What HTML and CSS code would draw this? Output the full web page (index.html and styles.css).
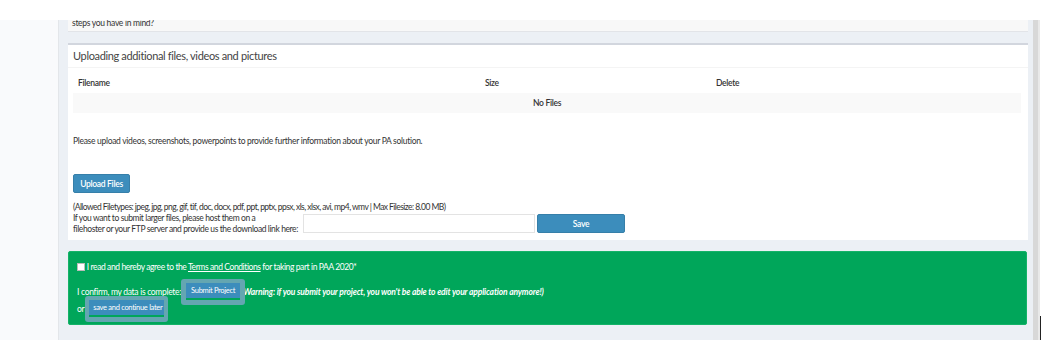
FILE: index.html
```html
<!DOCTYPE html>
<html>
<head>
<meta charset="utf-8">
<link rel="stylesheet" href="styles.css">
</head>
<body>
<div class="topbar"></div>
<div class="main">
  <aside class="sidebar"></aside>
  <div class="content">
    <div class="box box-prev">
      <p class="prev-text">steps you have in mind?</p>
    </div>
    <div class="box box-upload">
      <div class="box-header">Uploading additional files, videos and pictures</div>
      <div class="box-body">
        <table class="files">
          <colgroup><col class="c1"><col class="c2"><col class="c3"></colgroup>
          <thead><tr><th>Filename</th><th>Size</th><th>Delete</th></tr></thead>
          <tbody><tr class="empty"><td colspan="3">No Files</td></tr></tbody>
        </table>
        <p class="hint">Please upload videos, screenshots, powerpoints to provide further information about your PA solution.</p>
        <button class="btn btn-upload">Upload Files</button>
        <p class="allowed">(Allowed Filetypes: jpeg, jpg, png, gif, tif, doc, docx, pdf, ppt, pptx, ppsx, xls, xlsx, avi, mp4, wmv | Max Filesize: 8.00 MB)</p>
        <div class="link-row">
          <p class="link-label">If you want to submit larger files, please host them on a<br>filehoster or your FTP server and provide us the download link here:</p>
          <span class="input"></span>
          <button class="btn btn-save">Save</button>
        </div>
      </div>
    </div>
    <div class="box box-green">
      <div class="agree"><span class="check"></span> I read and hereby agree to the <u>Terms and Conditions</u> for taking part in PAA 2020*</div>
      <div class="confirm"><span class="lbl">I confirm, my data is complete:</span><span class="ring ring-submit"><button class="btn btn-small">Submit Project</button></span><em class="warn">(Warning: if you submit your project, you won't be able to edit your application anymore!)</em></div>
      <div class="later"><span class="lbl">or</span><span class="ring ring-later"><button class="btn btn-small">save and continue later</button></span></div>
    </div>
  </div>
  <div class="scroll"></div>
  <div class="rightside"><span class="cursor-line"></span></div>
</div>
</body>
</html>
```
FILE: styles.css
```css
* { box-sizing: border-box; }
body {
  margin: 0;
  background: #fff;
  font-family: Lato, "Open Sans", sans-serif;
  font-size: 8.5px;
  letter-spacing: -0.3px;
  color: #333;
}
p { margin: 0; }
.topbar { height: 20px; background: #fff; }
.main { display: flex; height: 320px; }
.sidebar { width: 59px; background: #f9fafc; border-right: 1px solid #e3e6ea; }
.content {
  width: 974px;
  background: #ecf0f5;
  padding: 0 5px 0 9px;
}
.scroll { width: 7px; background: #d8d8d8; border-right: 2px solid #e9e9e9; }
.rightside { flex: 1; position: relative; background: #fff; }
.cursor-line { position: absolute; left: 0; top: 296px; width: 1px; height: 24px; background: #222; }

.box { background: #fff; }
.box-prev {
  height: 12px;
  overflow: hidden;
  background: #f8f8f8;
  border-bottom: 1px solid #e2e4e8;
  padding-left: 4px;
}
.prev-text { margin-top: -3px; line-height: 12px; }

.box-upload {
  margin-top: 11px;
  border-top: 2px solid #d2d6de;
  height: 197px;
}
.box-header {
  height: 23px;
  line-height: 21px;
  padding-left: 5px;
  font-size: 11px;
  letter-spacing: -0.35px;
  color: #444;
  border-bottom: 1px solid #f4f4f4;
}
.box-body { padding: 5px 7px 0 5px; }
.files { width: 100%; border-collapse: collapse; }
.c1 { width: 407px; }
.c2 { width: 231px; }
.files th { text-align: left; font-weight: 600; height: 20px; padding: 0 5px; color: #333; }
.files td { height: 20px; text-align: center; background: #f9f9f9; font-weight: 600; }
.hint { margin-top: 23px; line-height: 11px; }
.btn {
  font-family: inherit;
  letter-spacing: inherit;
  white-space: nowrap;
  border: 1px solid #367fa9;
  background: #3c8dbc;
  color: #fff;
  border-radius: 2px;
  padding: 0;
  cursor: pointer;
}
.btn-upload { margin-top: 27px; width: 57px; height: 19px; font-size: 8.5px; font-weight: 600; display: block; }
.allowed { margin-top: 9px; line-height: 11px; letter-spacing: -0.55px; }
.link-row { display: flex; align-items: flex-start; }
.link-label { line-height: 11px; width: 230px; white-space: nowrap; letter-spacing: -0.4px; }
.input { width: 232px; height: 19px; margin-top: 1px; border: 1px solid #e3e3e3; background: #fff; }
.btn-save { width: 88px; height: 19px; margin-top: 1px; margin-left: 2px; font-size: 8.5px; font-weight: 600; }

.box-green {
  margin-top: 11px;
  width: 959px;
  height: 74px;
  background: #00a65a;
  border: 1px solid #14b368;
  border-radius: 2px;
  color: #fff;
  padding: 10px 0 0 8px;
}
.agree { height: 11px; line-height: 11px; white-space: nowrap; letter-spacing: -0.4px; }
.check { display: inline-block; vertical-align: -1px; width: 8px; height: 8px; background: #fff; border: 1px solid #bbb; }
.confirm { margin-top: 6px; display: flex; align-items: center; height: 26px; white-space: nowrap; }
.ring {
  display: inline-block;
  background: #64a6b1;
  border-radius: 3px;
  padding: 4px 5px 5px;
  position: relative;
  z-index: 1;
}
.ring-submit { margin-left: 0; }
.btn-small {
  display: block;
  font-size: 7.5px;
  height: 17px;
  border: none;
  border-bottom: 2px solid #00a65a;
  border-radius: 0;
  padding: 0 4px;
}
.ring-submit .btn-small { width: 54px; }
.warn { font-weight: 700; margin-left: -4px; letter-spacing: -0.15px; }
.later { display: flex; align-items: center; margin-top: -9px; height: 26px; }
.later .lbl { margin-right: 1px; }
.ring-later { padding: 4px 4px 5px; }
.ring-later .btn-small { width: 75px; }
```
